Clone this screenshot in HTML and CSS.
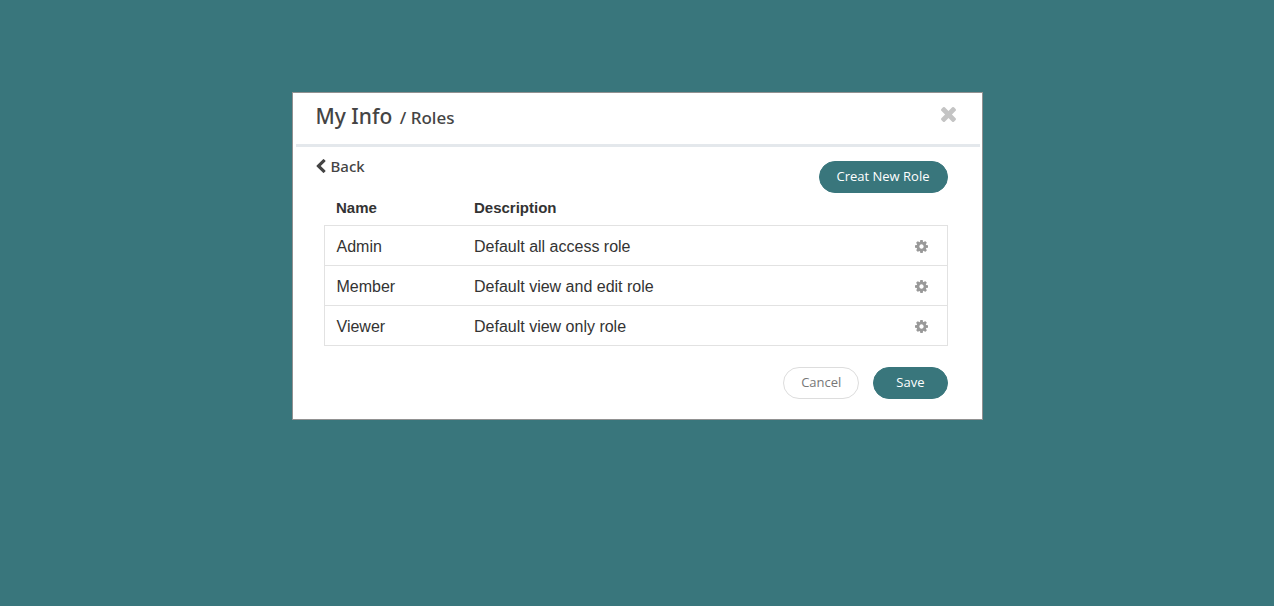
FILE: index.html
```html
<!DOCTYPE html>
<html lang="en">
<head>
<meta charset="utf-8">
<meta name="viewport" content="width=device-width, initial-scale=1">
<title>My Info / Roles</title>
<link rel="stylesheet" href="styles.css">
</head>
<body>
<svg class="sprite" aria-hidden="true">
  <symbol id="cog" viewBox="128 128 1536 1536"><path d="M1152 896q0-106-75-181t-181-75-181 75-75 181 75 181 181 75 181-75 75-181zm512-109v222q0 12-8 23t-20 13l-185 28q-19 54-39 91 35 50 107 138 10 12 10 25t-9 23q-27 37-99 108t-94 71q-12 0-26-9l-138-108q-44 23-91 38-16 136-29 186-7 28-36 28h-222q-14 0-24.500-8.500t-11.500-21.500l-28-184q-49-16-90-37l-141 107q-10 9-25 9-14 0-25-11-126-114-165-168-7-10-7-23 0-12 8-23 15-21 51-66.500t54-70.500q-27-50-41-99l-183-27q-13-2-21-12.500t-8-23.500v-222q0-12 8-23t19-13l186-28q14-46 39-92-40-57-107-138-10-12-10-24 0-10 9-23 26-36 98.500-107.500t94.500-71.500q13 0 26 10l138 107q44-23 91-38 16-136 29-186 7-28 36-28h222q14 0 24.500 8.500t11.500 21.500l28 184q49 16 90 37l142-107q9-9 24-9 13 0 25 10 129 119 165 170 7 8 7 22 0 12-8 23-15 21-51 66.500t-54 70.500q26 50 41 98l183 28q13 2 21 12.500t8 23.500z"/></symbol>
</svg>
<main class="modal" role="dialog" aria-labelledby="title">
  <header class="modal-header">
    <h1 class="title" id="title">My Info <span class="subtitle">/ Roles</span></h1>
    <button class="icon-button" type="button" aria-label="Close">
      <svg class="close-icon" viewBox="302 366 1188 1188" aria-hidden="true"><path d="M1490 1322q0 40-28 68l-136 136q-28 28-68 28t-68-28l-294-294-294 294q-28 28-68 28t-68-28l-136-136q-28-28-28-68t28-68l294-294-294-294q-28-28-28-68t28-68l136-136q28-28 68-28t68 28l294 294 294-294q28-28 68-28t68 28l136 136q28 28 28 68t-28 68l-294 294 294 294q28 28 28 68z"/></svg>
    </button>
  </header>
  <div class="toolbar">
    <a class="back" href="#"><svg class="back-icon" viewBox="410 26 1036 1612" aria-hidden="true"><path d="M1427 301l-531 531 531 531q19 19 19 45t-19 45l-166 166q-19 19-45 19t-45-19l-742-742q-19-19-19-45t19-45l742-742q19-19 45-19t45 19l166 166q19 19 19 45t-19 45z"/></svg>Back</a>
    <button class="button primary create" type="button">Creat New Role</button>
  </div>
  <div class="content">
    <table class="roles">
      <thead>
        <tr><th class="name" scope="col">Name</th><th scope="col">Description</th><td class="action"></td></tr>
      </thead>
      <tbody>
        <tr><td>Admin</td><td>Default all access role</td><td class="action"><button class="icon-button" type="button" aria-label="Admin settings"><svg class="cog" aria-hidden="true"><use href="#cog"/></svg></button></td></tr>
        <tr><td>Member</td><td>Default view and edit role</td><td class="action"><button class="icon-button" type="button" aria-label="Member settings"><svg class="cog" aria-hidden="true"><use href="#cog"/></svg></button></td></tr>
        <tr><td>Viewer</td><td>Default view only role</td><td class="action"><button class="icon-button" type="button" aria-label="Viewer settings"><svg class="cog" aria-hidden="true"><use href="#cog"/></svg></button></td></tr>
      </tbody>
    </table>
    <footer class="actions">
      <button class="button" type="button">Cancel</button>
      <button class="button primary save" type="button">Save</button>
    </footer>
  </div>
</main>
</body>
</html>
```
FILE: styles.css
```css
* {
  box-sizing: border-box;
}

body {
  margin: 0;
  padding: 92px 16px;
  background: #39767c;
  color: #444;
  font-family: "Noto Sans", "Open Sans", sans-serif;
}

.sprite {
  display: none;
}

.modal {
  max-width: 691px;
  margin: 0 auto;
  padding: 0 2px 20px 3px;
  border: 1px solid #919191;
  background: #fff;
}

.modal-header {
  display: flex;
  align-items: center;
  justify-content: space-between;
  padding: 8px 24px 12px 20px;
  border-bottom: 3px solid #e4e8ec;
}

.title {
  margin: 0;
  font-size: 21px;
  font-weight: 500;
  line-height: 31px;
}

.subtitle {
  margin-left: 2px;
  font-size: 17px;
  line-height: 1;
}

.icon-button {
  display: inline-flex;
  padding: 0;
  border: 0;
  background: none;
  color: #999;
  cursor: pointer;
}

.close-icon {
  width: 15px;
  height: 15px;
  margin-bottom: 4px;
  fill: #c4c4c4;
}

.toolbar {
  display: flex;
  align-items: flex-start;
  justify-content: space-between;
  padding: 12px 32px 0 20px;
}

.back {
  display: inline-flex;
  align-items: center;
  gap: 5px;
  color: #444;
  font-size: 15px;
  font-weight: 500;
  line-height: 12px;
  text-decoration: none;
}

.back-icon {
  width: 10px;
  height: 14px;
  fill: currentColor;
}

.button {
  height: 32px;
  padding: 0 17px 2px;
  border: 1px solid #ddd;
  border-radius: 16px;
  background: #fff;
  color: #777;
  font-family: "Open Sans", sans-serif;
  font-size: 13px;
  cursor: pointer;
}

.primary {
  border-color: #39767c;
  background: #39767c;
  color: #fff;
}

.create {
  margin-top: 2px;
}

.save {
  padding: 0 22px 2px;
}

.content {
  padding: 0 32px 0 28px;
}

.roles {
  width: 100%;
  border-collapse: collapse;
  color: #333;
  font-family: "Liberation Sans", Arial, sans-serif;
  font-size: 16px;
}

.roles th,
.roles td {
  height: 40px;
  padding: 4px 12px 0;
  text-align: left;
}

.roles th {
  height: 32px;
  padding-top: 0;
  padding-bottom: 2px;
  font-size: 15px;
}

.roles thead td {
  height: 32px;
}

.roles .name {
  width: 138px;
}

.roles .action {
  width: 50px;
  padding: 6px 18px 0;
}

.roles tbody tr {
  border: 1px solid #e2e2e2;
}

.cog {
  width: 13px;
  height: 13px;
  fill: #999;
}

.actions {
  display: flex;
  justify-content: flex-end;
  gap: 14px;
  margin-top: 21px;
}
```
